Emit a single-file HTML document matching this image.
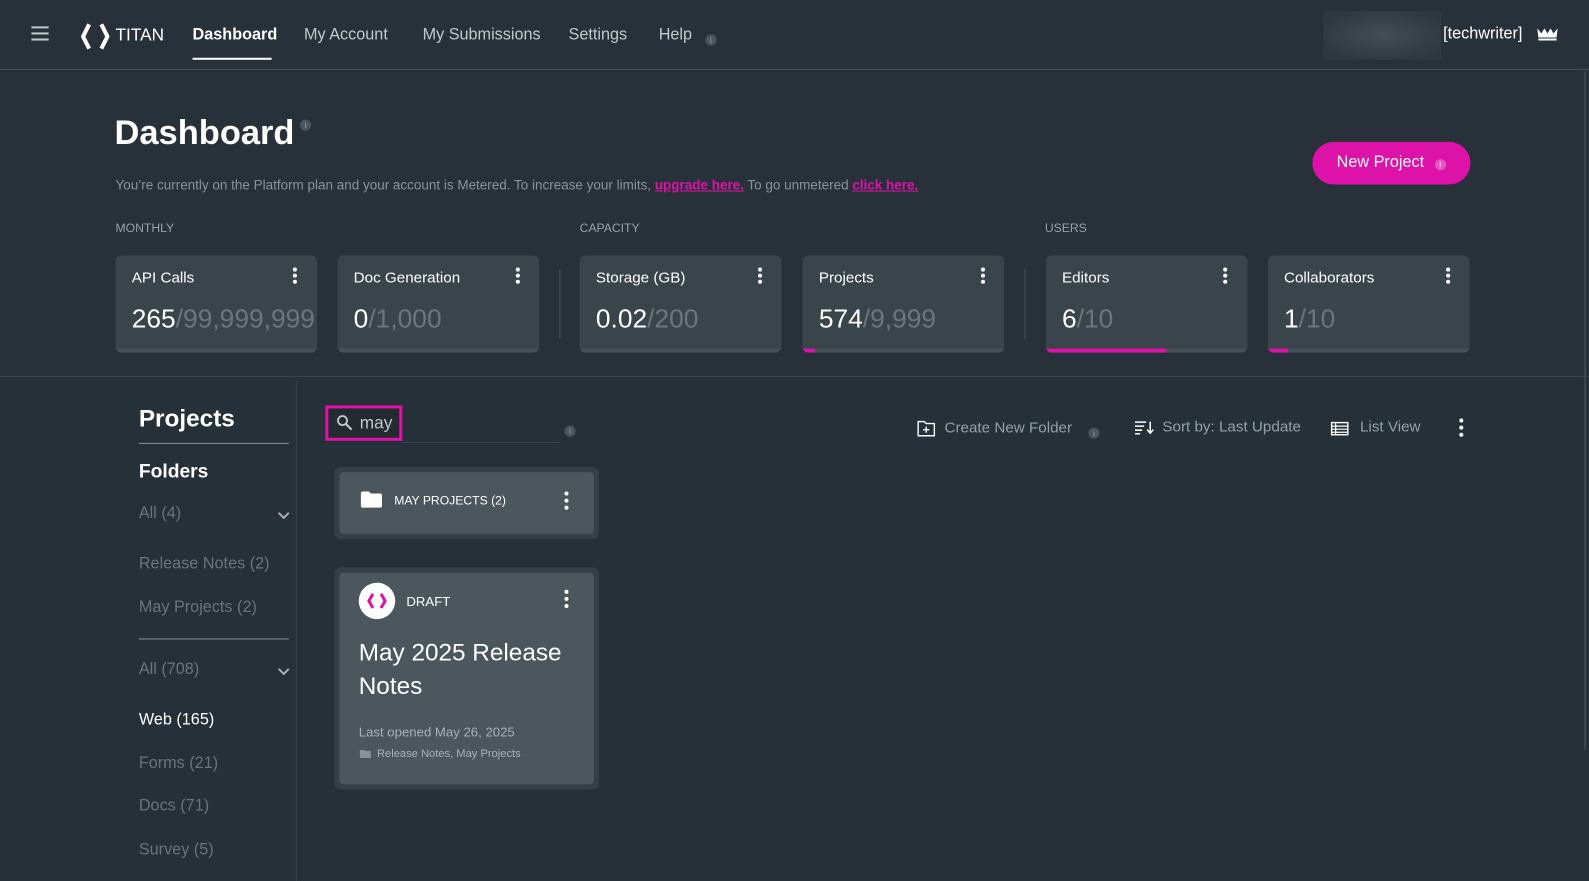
<!DOCTYPE html>
<html><head><meta charset="utf-8"><style>
*{margin:0;padding:0;box-sizing:border-box}
html,body{width:1589px;height:869px;overflow:hidden;background:#263038}
body{font-family:"Liberation Sans",sans-serif;color:#fff}
#w{position:absolute;left:0;top:0;width:1568px;height:858px;transform:scale(1.0134);transform-origin:0 0}
.a{position:absolute;white-space:nowrap}
.nav{font-size:16px;color:#c3c8cc;top:26px}
.card{position:absolute;top:252px;width:199px;height:96px;background:#3a444b;border-radius:6px;overflow:hidden}
.card .t{position:absolute;left:16px;top:14px;font-size:15px;color:#fff}
.card .v{position:absolute;left:16px;top:47px;font-size:26px;color:#fff}
.card .v span{color:#6d767c}
.card .bar{position:absolute;left:0;bottom:0;height:4px;width:100%;background:#47515a}
.card .bar i{display:block;height:100%;background:#e011a8}
.dots{position:absolute;width:4px}
.dots b{display:block;width:4px;height:4px;border-radius:2px;background:#fff;margin-bottom:2px}
.info{display:inline-block;width:11px;height:11px;border-radius:50%;background:#4c555c;color:#aaa;font-size:8px;text-align:center;line-height:11px;font-family:"Liberation Serif",serif}
.side{font-size:16px;color:#6b747a;left:137px}
.lbl{font-size:12px;color:#9aa1a6;top:218px}
</style></head><body><div id="w">
<div class="a" style="left:0;top:0;width:1568px;height:69px;background:#283139;border-bottom:1px solid #454e55"></div>
<div class="a" style="left:0;top:70px;width:1568px;height:302px;background:#283139;border-bottom:1px solid #3b444b"></div>
<div class="a" style="left:1563px;top:70px;width:2px;height:670px;background:#3a434a"></div>
<div class="a" style="left:31px;top:26px;width:17px;height:2px;background:#c3c8cc;box-shadow:0 6px 0 #c3c8cc,0 12px 0 #c3c8cc"></div>
<svg class="a" style="left:80px;top:23px" width="28" height="26" viewBox="0 0 28 26"><path d="M8 1 L2 13 L8 25 M20 1 L26 13 L20 25" stroke="#fff" stroke-width="4" fill="none"/></svg>
<div class="a" style="left:114px;top:25px;font-size:17px;color:#fff">TITAN</div>
<div class="a nav" style="left:190px;color:#fff;font-weight:bold">Dashboard</div>
<div class="a" style="left:190px;top:57px;width:78px;height:2px;background:#fff"></div>
<div class="a nav" style="left:300px">My Account</div>
<div class="a nav" style="left:417px">My Submissions</div>
<div class="a nav" style="left:561px">Settings</div>
<div class="a nav" style="left:650px">Help</div>
<div class="a" style="left:696px;top:29px"><span class="info">i</span></div>
<div class="a" style="left:1306px;top:11px;width:116px;height:48px;background:radial-gradient(ellipse at center,#444d54 0%,#2f383f 80%)"></div>
<div class="a" style="left:1424px;top:25px;font-size:16px;color:#fff">[techwriter]</div>
<svg class="a" style="left:1516px;top:27px" width="22" height="13" viewBox="0 0 22 13"><path d="M1 1 L5 6 L8 1 L11 6 L14 1 L17 6 L21 1 L20 10 L2 10Z" fill="#fff"/><rect x="2" y="11" width="18" height="2" fill="#fff"/></svg>

<div class="a" style="left:113px;top:112px;font-size:34px;font-weight:bold">Dashboard</div>
<div class="a" style="left:296px;top:113px"><span class="info">i</span></div>
<div class="a" style="left:114px;top:175px;font-size:13.3px;color:#8b9398">You’re currently on the Platform plan and your account is Metered. To increase your limits, <b style="color:#e011a8;text-decoration:underline">upgrade here.</b> To go unmetered <b style="color:#e011a8;text-decoration:underline">click here.</b></div>
<div class="a" style="left:1295px;top:140px;width:156px;height:42px;border-radius:21px;background:#dd12a9;font-size:16px;line-height:42px;padding-left:24px">New Project <span class="info" style="background:#e655bf;color:#fff;margin-left:6px">i</span></div>

<div class="a lbl" style="left:114px">MONTHLY</div>
<div class="a lbl" style="left:572px">CAPACITY</div>
<div class="a lbl" style="left:1031px">USERS</div>
<div class="a" style="left:552px;top:266px;width:1px;height:68px;background:#4a535a"></div>
<div class="a" style="left:1011px;top:266px;width:1px;height:68px;background:#4a535a"></div>

<div class="card" style="left:114px"><div class="t">API Calls</div><div class="v">265<span>/99,999,999</span></div><div class="bar"></div></div>
<div class="card" style="left:333px"><div class="t">Doc Generation</div><div class="v">0<span>/1,000</span></div><div class="bar"></div></div>
<div class="card" style="left:572px"><div class="t">Storage (GB)</div><div class="v">0.02<span>/200</span></div><div class="bar"></div></div>
<div class="card" style="left:792px"><div class="t">Projects</div><div class="v">574<span>/9,999</span></div><div class="bar"><i style="width:6%"></i></div></div>
<div class="card" style="left:1032px"><div class="t">Editors</div><div class="v">6<span>/10</span></div><div class="bar"><i style="width:60%"></i></div></div>
<div class="card" style="left:1251px"><div class="t">Collaborators</div><div class="v">1<span>/10</span></div><div class="bar"><i style="width:10%"></i></div></div>
<div class="dots" style="left:289px;top:264px"><b></b><b></b><b></b></div>
<div class="dots" style="left:509px;top:264px"><b></b><b></b><b></b></div>
<div class="dots" style="left:748px;top:264px"><b></b><b></b><b></b></div>
<div class="dots" style="left:968px;top:264px"><b></b><b></b><b></b></div>
<div class="dots" style="left:1207px;top:264px"><b></b><b></b><b></b></div>
<div class="dots" style="left:1427px;top:264px"><b></b><b></b><b></b></div>

<div class="a" style="left:292px;top:376px;width:1px;height:493px;background:#3b444b"></div>
<div class="a" style="left:137px;top:400px;font-size:24px;font-weight:bold">Projects</div>
<div class="a" style="left:137px;top:437px;width:148px;height:1px;background:#8a9297"></div>
<div class="a" style="left:137px;top:455px;font-size:19px;font-weight:bold">Folders</div>
<div class="a side" style="top:498px">All (4)</div>
<div class="a side" style="top:548px">Release Notes (2)</div>
<div class="a side" style="top:591px">May Projects (2)</div>
<div class="a" style="left:137px;top:630px;width:148px;height:1px;background:#8a9297"></div>
<div class="a side" style="top:652px">All (708)</div>
<svg class="a" style="left:274px;top:505px" width="12" height="8"><path d="M1 1L6 6L11 1" stroke="#aab" stroke-width="2" fill="none"/></svg>
<svg class="a" style="left:274px;top:659px" width="12" height="8"><path d="M1 1L6 6L11 1" stroke="#aab" stroke-width="2" fill="none"/></svg>
<div class="a side" style="top:702px;color:#fff">Web (165)</div>
<div class="a side" style="top:745px">Forms (21)</div>
<div class="a side" style="top:787px">Docs (71)</div>
<div class="a side" style="top:830px">Survey (5)</div>

<div class="a" style="left:321px;top:400px;width:76px;height:35px;border:3px solid #e011a8;background:#232b31"></div>
<svg class="a" style="left:332px;top:409px" width="16" height="16"><circle cx="6" cy="6" r="4.5" stroke="#c3c8cc" stroke-width="1.8" fill="none"/><path d="M9.5 9.5L15 15" stroke="#c3c8cc" stroke-width="2"/></svg>
<div class="a" style="left:355px;top:408px;font-size:17px;color:#c3c8cc">may</div>
<div class="a" style="left:397px;top:436px;width:155px;height:1px;background:#3c464d"></div>
<div class="a" style="left:557px;top:415px"><span class="info">i</span></div>

<svg class="a" style="left:905px;top:414px" width="18" height="17"><path d="M1 2h6l2 2h8v12H1z" stroke="#fff" stroke-width="1.4" fill="none"/><path d="M9 7v6M6 10h6" stroke="#fff" stroke-width="1.4"/></svg>
<div class="a" style="left:932px;top:414px;font-size:15px;color:#8ea4a8">Create New Folder</div>
<div class="a" style="left:1074px;top:417px"><span class="info">i</span></div>
<svg class="a" style="left:1119px;top:415px" width="20" height="14"><path d="M1 1.5h11M1 5.5h9M1 9.5h7M1 13h5" stroke="#fff" stroke-width="1.5"/><path d="M16 1v11M13 9l3 3.5 3-3.5" stroke="#fff" stroke-width="1.5" fill="none"/></svg>
<div class="a" style="left:1147px;top:413px;font-size:15px;color:#8ea4a8">Sort by: Last Update</div>
<svg class="a" style="left:1313px;top:416px" width="18" height="14"><rect x="1" y="1" width="16" height="12" stroke="#fff" stroke-width="1.4" fill="none"/><path d="M1 4.5h16M1 7.5h16M1 10.5h16M5 1v12" stroke="#fff" stroke-width="1.2"/></svg>
<div class="a" style="left:1342px;top:413px;font-size:15px;color:#8ea4a8">List View</div>
<div class="dots" style="left:1440px;top:413px"><b style="margin-bottom:3px"></b><b style="margin-bottom:3px"></b><b></b></div>

<div class="a" style="left:330px;top:461px;width:261px;height:71px;background:#353f46;border-radius:6px"></div>
<div class="a" style="left:335px;top:466px;width:251px;height:61px;background:#4b565d;border-radius:4px"></div>
<svg class="a" style="left:356px;top:485px" width="21" height="16"><path d="M0 2Q0 0 2 0H8L10 2H19Q21 2 21 4V14Q21 16 19 16H2Q0 16 0 14Z" fill="#fff"/></svg>
<div class="a" style="left:389px;top:487px;font-size:12px;color:#fff">MAY PROJECTS (2)</div>
<div class="dots" style="left:557px;top:485px"><b style="margin-bottom:3px"></b><b style="margin-bottom:3px"></b><b></b></div>

<div class="a" style="left:330px;top:560px;width:261px;height:219px;background:#353f46;border-radius:6px"></div>
<div class="a" style="left:335px;top:565px;width:251px;height:209px;background:#4b565d;border-radius:4px"></div>
<div class="a" style="left:354px;top:575px;width:36px;height:36px;border-radius:50%;background:#fff"></div>
<svg class="a" style="left:362px;top:585px" width="20" height="16"><path d="M6 1L2 8L6 15M14 1L18 8L14 15" stroke="#e011a8" stroke-width="3" fill="none"/></svg>
<div class="a" style="left:401px;top:586px;font-size:13px;color:#fff">DRAFT</div>
<div class="dots" style="left:557px;top:582px"><b style="margin-bottom:3px"></b><b style="margin-bottom:3px"></b><b></b></div>
<div class="a" style="left:354px;top:628px;font-size:24px;line-height:33px;color:#fff;white-space:normal;width:220px">May 2025 Release Notes</div>
<div class="a" style="left:354px;top:715px;font-size:13px;color:#aab1b5">Last opened May 26, 2025</div>
<svg class="a" style="left:355px;top:740px" width="11" height="8"><path d="M0 0H4L5 1H11V8H0Z" fill="#8a9297"/></svg>
<div class="a" style="left:372px;top:738px;font-size:11px;color:#aab1b5">Release Notes, May Projects</div>
</div></body></html>
